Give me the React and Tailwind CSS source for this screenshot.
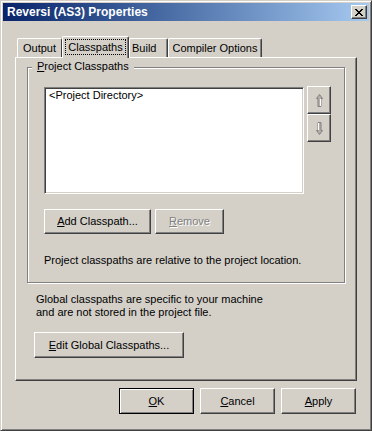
import React from "react";

const raised =
  "border border-t-white border-l-white border-b-[#404040] border-r-[#404040] shadow-[inset_-1px_-1px_0_#808080]";

const Btn = ({ className = "", children, disabled }) => (
  <div
    className={`flex items-center justify-center bg-[#d4d0c8] ${raised} ${
      disabled ? "text-[#808080] [text-shadow:1px_1px_0_#fff]" : "text-black"
    } ${className}`}
  >
    {children}
  </div>
);

const Arrow = ({ down }) => (
  <svg width="7" height="13" viewBox="0 0 7 13" className={down ? "rotate-180" : ""}>
    <path d="M3.5 0.5 L6.5 4.5 L5 4.5 L5 12.5 L2 12.5 L2 4.5 L0.5 4.5 Z" fill="#b4b0a8" stroke="#808080" strokeWidth="1" />
    <path d="M4.5 5 L4.5 12" stroke="#ffffff" strokeWidth="1" />
  </svg>
);

const CloseGlyph = () => (
  <svg width="8" height="7" viewBox="0 0 8 7" shapeRendering="crispEdges">
    {[
      [0, 0], [1, 0], [6, 0], [7, 0],
      [1, 1], [2, 1], [5, 1], [6, 1],
      [2, 2], [3, 2], [4, 2], [5, 2],
      [3, 3], [4, 3],
      [2, 4], [3, 4], [4, 4], [5, 4],
      [1, 5], [2, 5], [5, 5], [6, 5],
      [0, 6], [1, 6], [6, 6], [7, 6],
    ].map(([x, y]) => (
      <rect key={`${x}-${y}`} x={x} y={y} width="1" height="1" fill="#000" />
    ))}
  </svg>
);

export default function App() {
  return (
    <div className="w-[372px] h-[431px] bg-[#d4d0c8] border border-t-[#d4d0c8] border-l-[#d4d0c8] border-b-[#404040] border-r-[#404040] shadow-[inset_1px_1px_0_#fff,inset_-1px_-1px_0_#808080] p-[2px] font-['Liberation_Sans',Arial,sans-serif] text-[11px] leading-[13px] text-black flex flex-col">
      {/* Title bar */}
      <div className="h-[18px] flex items-center justify-between bg-gradient-to-r from-[#0a246a] to-[#a6caf0] pl-[4px] pr-[2px]">
        <span className="text-white font-bold text-[12px]">Reversi (AS3) Properties</span>
        <div className={`w-[16px] h-[14px] flex items-center justify-center bg-[#d4d0c8] ${raised}`}>
          <CloseGlyph />
        </div>
      </div>

      {/* Tabs */}
      <div className="mt-[15px] ml-[14px] h-[21px] flex items-end">
        <div className="w-[45px] h-[19px] flex items-center justify-center border border-b-0 border-t-white border-l-white border-r-[#404040] rounded-t-[2px]">
          Output
        </div>
        <div className="relative z-10 w-[67px] h-[22px] -mb-[1px] pb-[2px] flex items-center justify-center bg-[#d4d0c8] border border-b-0 border-t-white border-l-white border-r-[#404040] shadow-[inset_-1px_0_0_#808080] rounded-t-[2px]">
          <span className="outline outline-1 outline-dotted outline-black px-[2px] leading-[14px]">Classpaths</span>
        </div>
        <div className="w-[39px] h-[19px] flex items-center justify-start pl-[2px] border border-b-0 border-t-white border-l-white border-r-[#404040] shadow-[inset_-1px_0_0_#808080] rounded-t-[2px]">
          Build
        </div>
        <div className="w-[94px] h-[19px] flex items-center justify-center border border-b-0 border-t-white border-l-white border-r-[#404040] shadow-[inset_-1px_0_0_#808080] rounded-t-[2px]">
          Compiler Options
        </div>
      </div>

      {/* Panel */}
      <div className="relative ml-[12px] w-[342px] h-[324px] border border-t-white border-l-white border-b-[#404040] border-r-[#404040] shadow-[inset_-1px_-1px_0_#808080] flex flex-col">
        <div className="relative ml-[11px] mt-[9px] w-[318px] h-[216px] border border-[#808080] shadow-[inset_1px_1px_0_#fff,1px_1px_0_#fff] pl-[16px] pt-[18px]">
          <span className="absolute left-[4px] top-[-8px] px-[5px] bg-[#d4d0c8]">
            <u>P</u>roject Classpaths
          </span>
          <div className="flex gap-[3px]">
            <div className="mt-[1px] w-[260px] h-[107px] bg-white border border-t-[#808080] border-l-[#808080] border-b-white border-r-white shadow-[inset_1px_1px_0_#404040,inset_-1px_-1px_0_#d4d0c8] pl-[4px] pt-[1px]">
              &lt;Project Directory&gt;
            </div>
            <div className="flex flex-col">
              <Btn className="w-[24px] h-[28px]">
                <Arrow />
              </Btn>
              <Btn className="w-[24px] h-[28px]">
                <Arrow down />
              </Btn>
            </div>
          </div>
          <div className="mt-[15px] flex gap-[4px]">
            <Btn className="w-[107px] h-[25px]">
              <span><u>A</u>dd Classpath...</span>
            </Btn>
            <Btn className="w-[69px] h-[25px]" disabled>
              <span><u>R</u>emove</span>
            </Btn>
          </div>
          <p className="mt-[20px]">Project classpaths are relative to the project location.</p>
        </div>

        <p className="mt-[10px] ml-[20px]">
          Global classpaths are specific to your machine
          <br />
          and are not stored in the project file.
        </p>
        <Btn className="mt-[13px] ml-[18px] w-[150px] h-[26px]">
          <span><u>E</u>dit Global Classpaths...</span>
        </Btn>
      </div>

      {/* Dialog buttons */}
      <div className="mt-[7px] ml-[116px] flex gap-[6px]">
        <div className="w-[75px] h-[26px] flex items-center justify-center border border-black shadow-[inset_1px_1px_0_#fff,inset_-1px_-1px_0_#808080]">
          <span><u>O</u>K</span>
        </div>
        <Btn className="w-[75px] h-[26px]">
          <span><u>C</u>ancel</span>
        </Btn>
        <Btn className="w-[75px] h-[26px]">
          <span><u>A</u>pply</span>
        </Btn>
      </div>
    </div>
  );
}
